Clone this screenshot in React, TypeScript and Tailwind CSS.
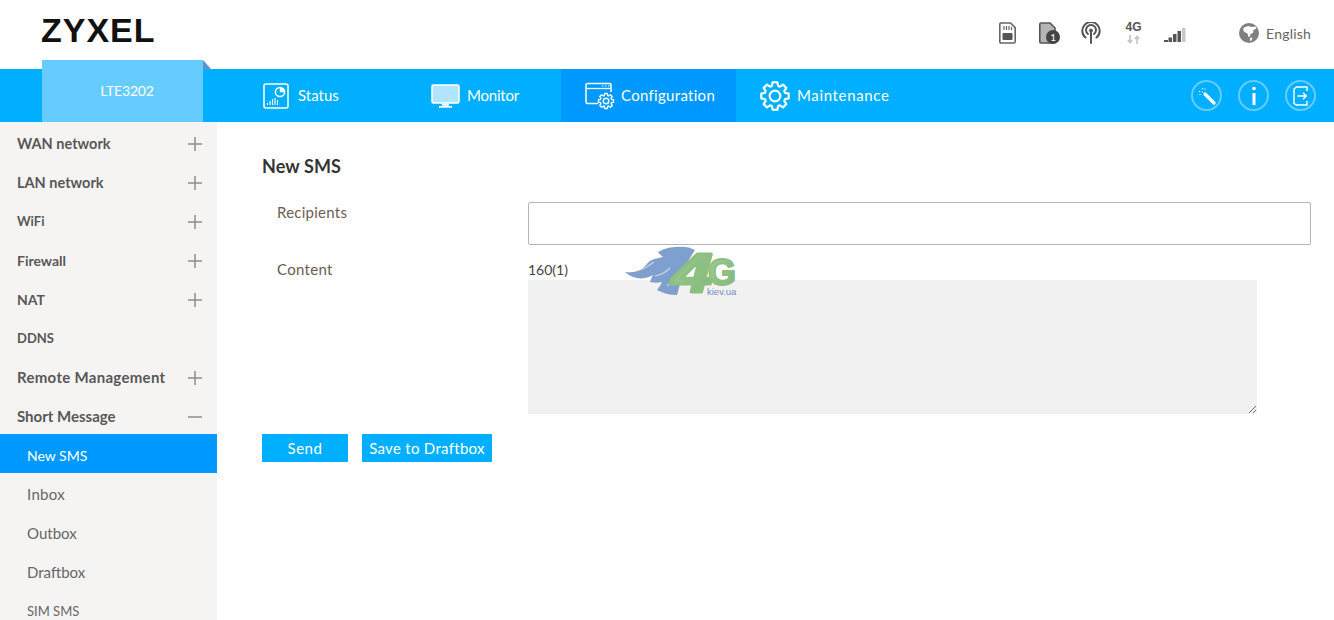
import React from 'react';

const menu = [
  { name: 'WAN network', cls: 'text-[14.5px]', toggle: true },
  { name: 'LAN network', cls: 'text-[14.5px]', toggle: true },
  { name: 'WiFi', cls: 'text-[13px]', toggle: true },
  { name: 'Firewall', cls: 'text-[14px]', toggle: true },
  { name: 'NAT', cls: 'text-[14px]', toggle: true },
  { name: 'DDNS', cls: 'text-[13px]', toggle: false },
  { name: 'Remote Management', cls: 'text-[15px] tracking-[0.3px]', toggle: true },
  { name: 'Short Message', cls: 'text-[15px]', toggle: true },
];
const subMenu = [
  { name: 'New SMS', cls: 'text-[14px] bg-[#0099ff] text-white' },
  { name: 'Inbox', cls: 'text-[15px] tracking-[0.3px] text-[#666]' },
  { name: 'Outbox', cls: 'text-[15px] text-[#666]' },
  { name: 'Draftbox', cls: 'text-[15px] text-[#666]' },
  { name: 'SIM SMS', cls: 'text-[13px] text-[#666]' },
];

// 8 tooth gear outline
function gearPath(c: number, outer: number, inner: number) {
  const pts: string[] = [];
  for (let i = 0; i < 8; i++) {
    const a = (i * Math.PI) / 4 - Math.PI / 2;
    const offs: [number, number][] = [[-0.3, inner], [-0.17, outer], [0.17, outer], [0.3, inner]];
    offs.forEach(([d, r]) => {
      pts.push(`${(c + Math.cos(a + d) * r).toFixed(2)} ${(c + Math.sin(a + d) * r).toFixed(2)}`);
    });
  }
  return `M${pts.join('L')}Z`;
}

function Gear({ size, stroke = 2 }: { size: number; stroke?: number }) {
  return (
    <svg width={size} height={size} viewBox="0 0 28 28" fill="none" stroke="white" strokeWidth={stroke} strokeLinejoin="round">
      <path d={gearPath(14, 13, 9.8)} />
      <circle cx="14" cy="14" r="5" />
    </svg>
  );
}

function StatusIcon() {
  return (
    <svg width="26" height="26" viewBox="0 0 26 26" fill="none" stroke="white">
      <rect x="1" y="1" width="24" height="24" rx="2" strokeWidth="1.5" />
      <circle cx="17" cy="9" r="4.6" strokeWidth="1.5" />
      <path d="M17 9V4.4A4.6 4.6 0 0 1 21.6 9Z" fill="white" strokeWidth="0.5" />
      <path d="M4.5 22v-2M7 22v-4M9.5 22v-6M12 22v-7M14.500 22v-5" strokeWidth="1.1" />
    </svg>
  );
}

function MonitorIcon() {
  return (
    <svg width="29" height="24" viewBox="0 0 29 24" fill="none" stroke="white">
      <rect x="1" y="1" width="27" height="18" rx="1.500" strokeWidth="1.5" fill="#b3e4ff" />
      <path d="M11.500 19.500v1.800h6v-1.800" fill="white" strokeWidth="1" />
      <path d="M8 22.800h13" strokeWidth="1.8" />
    </svg>
  );
}

function ConfigIcon() {
  return (
    <svg width="30" height="28" viewBox="0 0 30 28" fill="none" stroke="white">
      <path d="M13 21.500H2.500a1.500 1.500 0 0 1-1.500-1.500V3a1.500 1.500 0 0 1 1.500-1.500h22A1.500 1.500 0 0 1 26 3v7" strokeWidth="1.5" />
      <path d="M1 6.500h25" strokeWidth="1.3" />
      <path d="M17 4h1.500M20 4h1.500M23 4h1.500" strokeWidth="1.2" />
      <g transform="translate(13 11)">
        <path d={gearPath(8, 7.6, 5.700)} strokeWidth="1.4" strokeLinejoin="round" fill="#0099ff" />
        <circle cx="8" cy="8" r="2.800" strokeWidth="1.4" />
      </g>
    </svg>
  );
}

function SimIcon({ badge }: { badge?: boolean }) {
  if (badge) {
    return (
      <div className="relative w-[21px] h-[22px]">
        <svg width="17" height="22" viewBox="0 0 17 22" fill="none">
          <path d="M2 1h9l5 5v13.500a1.500 1.500 0 0 1-1.500 1.500h-12.500A1.500 1.500 0 0 1 .8 19.500V2.200A1.200 1.200 0 0 1 2 1Z" fill="#b5b5b5" stroke="#555" strokeWidth="1.6" />
        </svg>
        <span className="absolute right-0 bottom-0 w-[14px] h-[14px] rounded-full bg-[#444] text-white text-[10px] leading-[14px] text-center font-['Lato',sans-serif]">1</span>
      </div>
    );
  }
  return (
    <svg width="17" height="22" viewBox="0 0 17 22" fill="none">
      <path d="M2 1h9.500l4.700 4.700v14a1.300 1.300 0 0 1-1.300 1.300H2a1.200 1.200 0 0 1-1.200-1.200V2.200A1.200 1.200 0 0 1 2 1Z" stroke="#666" strokeWidth="1.6" />
      <path d="M5 4v4M7.500 4v4M10 4v4M12.500 5v3" stroke="#666" strokeWidth="1.2" />
      <rect x="3.500" y="11" width="10" height="7" rx="1" fill="#555" />
    </svg>
  );
}

function AntennaIcon() {
  return (
    <svg width="20" height="22" viewBox="0 0 20 22" fill="none" stroke="#555" strokeWidth="2" strokeLinecap="round">
      <path d="M4.500 15.500a8.700 8.700 0 1 1 11 0" />
      <path d="M7 12a5 5 0 1 1 6 0" />
      <circle cx="10" cy="8.500" r="1.500" fill="#555" strokeWidth="1" />
      <path d="M10 10v11" />
    </svg>
  );
}

function NetIcon() {
  return (
    <div className="flex flex-col items-center w-[17px] font-['Liberation_Sans',sans-serif]">
      <span className="text-[12px] leading-[11px] font-bold text-[#555]">4G</span>
      <svg width="13" height="9" viewBox="0 0 13 9" fill="none" stroke="#c4c4c4" strokeWidth="1.6" className="mt-[2px]">
        <path d="M3 0v7M.8 5 3 7.500 5.200 5" />
        <path d="M10 9V2M7.800 4 10 1.500 12.200 4" />
      </svg>
    </div>
  );
}

function SignalIcon() {
  return (
    <svg width="22" height="16" viewBox="0 0 22 16">
      <rect x="0" y="13" width="4" height="2" fill="#555" />
      <rect x="4.500" y="10.500" width="3.500" height="4.500" fill="#555" />
      <rect x="9" y="7" width="3.500" height="8" fill="#555" />
      <rect x="13.500" y="4" width="3.500" height="11" fill="#555" />
      <rect x="18" y="1" width="3.500" height="14" fill="#c8c8c8" />
    </svg>
  );
}

function GlobeIcon() {
  return (
    <svg width="20" height="20" viewBox="0 0 20 20">
      <circle cx="10" cy="10" r="10" fill="#7f7f7f" />
      <path d="M5 4.500 9 3l4 1 3.500-.5 1 2-3 1.500-.5 3-2.500 1-.5 2.500-1.500.5-1-3.500L5.500 9 4 6.500Z" fill="white" />
      <path d="M11 15l2.500-.5-1 3-1.500.5Z" fill="white" />
    </svg>
  );
}

function WandIcon() {
  return (
    <svg width="20" height="20" viewBox="0 0 20 20" fill="none" stroke="white">
      <path d="M8 8l9 9" strokeWidth="3.2" strokeLinecap="round" />
      <path d="M2 5.500h1.200M5.500 2v1.200M2.500 8.500h1M8 2.500v1M5 6h1" strokeWidth="1.1" />
    </svg>
  );
}

function InfoIcon() {
  return (
    <svg width="8" height="20" viewBox="0 0 8 20" fill="white">
      <circle cx="4" cy="2.500" r="1.800" />
      <rect x="2.500" y="7" width="3" height="12" />
    </svg>
  );
}

function LogoutIcon() {
  return (
    <svg width="16" height="20" viewBox="0 0 16 20" fill="none" stroke="white" strokeWidth="1.4">
      <path d="M14 5V1H3.500L1 3v14.500L3.500 19H14v-4" />
      <path d="M4.500 10H13M10 6.800 13.300 10 10 13.200" />
    </svg>
  );
}

function Toggle({ open }: { open: boolean }) {
  return (
    <svg width="14" height="14" viewBox="0 0 14 14" stroke="#8e8e8e" strokeWidth="1.5">
      <path d="M0 7h14" />
      {!open && <path d="M7 0v14" />}
    </svg>
  );
}

function Watermark() {
  return (
    <div className="absolute left-[625px] top-[246px] w-[125px] h-[64px] pointer-events-none">
      <svg width="125" height="64" viewBox="0 0 125 64">
        <defs>
          <linearGradient id="leaf" x1="0" y1="0" x2="1" y2="1">
            <stop offset="0" stopColor="#a5cf96" />
            <stop offset="1" stopColor="#7db574" />
          </linearGradient>
        </defs>
        <path
          d="M0 26C7 27 13 26 18 22 22 18 24 15 27 14 31 12 35 12 38 11 36 9 34 8 33 6 40 2 46 1 52 1 58 0 65 1 70 4L60 20 52 49C44 49 38 47 32 44 34 41 36 39 37 36 33 37 29 37 25 36 26 33 27 31 28 29 23 32 17 33 12 32 7 31 3 29 0 26Z"
          fill="#7f9fcf"
        />
        <path d="M9 24C17 25 23 20 29 16M30 30C36 29 41 26 45 22M42 40C45 37 48 34 50 31" fill="none" stroke="#ffffff" strokeOpacity="0.55" strokeWidth="1.2" />
        <text transform="translate(47 46) scale(1.3 1)" fontFamily="'Liberation Sans', sans-serif" fontWeight="700" fontStyle="italic" fontSize="56" fill="url(#leaf)" stroke="#8cbf80" strokeWidth="3" strokeLinejoin="round">4</text>
        <text x="83" y="39" fontFamily="'Liberation Sans', sans-serif" fontWeight="700" fontSize="36" fill="url(#leaf)" stroke="#8cbf80" strokeWidth="2" strokeLinejoin="round">G</text>
        <text x="82" y="49" fontFamily="'Liberation Sans', sans-serif" fontSize="9.500" fill="#6f8fbf">kiev.ua</text>
      </svg>
    </div>
  );
}

export default function App() {
  return (
    <div className="relative w-[1334px] h-[620px] overflow-hidden bg-white font-['Lato',sans-serif] text-[#555]">
      {/* top bar */}
      <header className="h-[69px] flex items-start justify-between pl-[41px] pr-[23px]">
        <span className="mt-[9px] text-[34px] leading-[42px] font-bold tracking-[1px] text-[#111] font-['Liberation_Sans',sans-serif]">ZYXEL</span>
        <div className="flex items-center h-[66px]">
          <SimIcon />
          <div className="ml-[23px]"><SimIcon badge /></div>
          <div className="ml-[21px]"><AntennaIcon /></div>
          <div className="ml-[24px]"><NetIcon /></div>
          <div className="ml-[22px] mt-[3px]"><SignalIcon /></div>
          <div className="ml-[53px]"><GlobeIcon /></div>
          <span className="ml-[7px] text-[14px] tracking-[0.2px] text-[#666]">English</span>
        </div>
      </header>

      {/* nav */}
      <nav className="h-[53px] bg-[#00afff] flex text-white">
        <div className="relative ml-[42px] -mt-[9px] w-[161px] h-[62px] bg-[#66ccff] flex items-center justify-center text-[14px] pb-[2px] pl-[9px] tracking-[-0.2px]">
          LTE3202
          <div className="absolute left-full top-0 w-0 h-0 border-t-[9px] border-r-[8px] border-t-transparent border-r-transparent border-l-[8px] border-l-[#5f90cc] border-b-0" />
        </div>
        <div className="ml-[36px] w-[168px] flex items-center gap-[9px] pl-[24px] text-[15px]"><StatusIcon /><span>Status</span></div>
        <div className="w-[154px] flex items-center gap-[7px] pl-[24px] text-[15px] tracking-[-0.2px]"><MonitorIcon /><span>Monitor</span></div>
        <div className="w-[175px] flex items-center gap-[6px] pl-[24px] bg-[#0099ff] text-[15px] tracking-[0.3px]"><ConfigIcon /><span>Configuration</span></div>
        <div className="flex items-center gap-[7px] pl-[24px] text-[15px] tracking-[0.65px]"><Gear size={30} /><span>Maintenance</span></div>
        <div className="ml-auto mr-[18px] flex items-center gap-[16px]">
          <div className="w-[31px] h-[31px] rounded-full border-2 border-[#66ccff] flex items-center justify-center"><WandIcon /></div>
          <div className="w-[31px] h-[31px] rounded-full border-2 border-[#66ccff] flex items-center justify-center"><InfoIcon /></div>
          <div className="w-[31px] h-[31px] rounded-full border-2 border-[#66ccff] flex items-center justify-center"><LogoutIcon /></div>
        </div>
      </nav>

      <div className="flex">
        {/* sidebar */}
        <aside className="w-[217px] h-[498px] bg-[#f5f4f3] shrink-0">
          {menu.map((m) => (
            <div key={m.name} className={`h-[39px] pl-[17px] pr-[15px] pt-[4px] flex items-center justify-between font-bold text-[#595757] ${m.cls}`}>
              <span>{m.name}</span>
              {m.toggle && <Toggle open={m.name === 'Short Message'} />}
            </div>
          ))}
          {subMenu.map((s) => (
            <div key={s.name} className={`h-[39px] pl-[27px] pt-[4px] flex items-center ${s.cls}`}>
              {s.name}
            </div>
          ))}
        </aside>

        {/* content */}
        <main className="flex-1 pl-[45px] pr-[23px]">
          <h2 className="mt-[33px] text-[18px] leading-[22px] font-bold text-[#333] tracking-[0.1px]">New SMS</h2>
          <div className="mt-[25px] flex">
            <label className="w-[266px] pl-[15px] text-[15px] leading-[20px] tracking-[0.25px] text-[#6b5d52]">Recipients</label>
            <input type="text" className="flex-1 h-[43px] rounded-[2px] border border-[#b5b5b5] bg-white" />
          </div>
          <div className="mt-[14px] flex">
            <label className="w-[266px] pl-[15px] text-[15px] leading-[20px] tracking-[0.3px] text-[#6b5d52]">Content</label>
            <div>
              <div className="h-[21px] leading-[21px] text-[14px] text-[#444]">160(1)</div>
              <textarea className="block w-[729px] h-[134px] bg-[#f1f1f1] outline-none" />
            </div>
          </div>
          <div className="mt-[20px] flex gap-[14px] text-white text-[15px]">
            <button className="w-[86px] h-[28px] bg-[#00afff] tracking-[0.5px]">Send</button>
            <button className="w-[130px] h-[28px] bg-[#00afff] tracking-[0.3px]">Save to Draftbox</button>
          </div>
        </main>
      </div>

      <Watermark />
    </div>
  );
}
